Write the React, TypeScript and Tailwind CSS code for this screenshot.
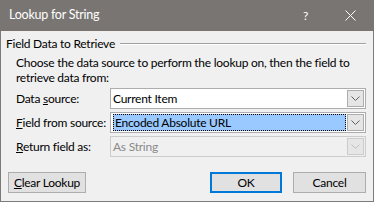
import React from "react";

const font = { fontFamily: 'Lato, "Noto Sans", sans-serif' };

function Chevron({ color = "#5c5c5c" }: { color?: string }) {
  return (
    <svg width="9" height="5" viewBox="0 0 9 5" fill="none">
      <path d="M0.5 0.5 L4.5 4.5 L8.5 0.5" stroke={color} strokeWidth="1" />
    </svg>
  );
}

function Arrow({ disabled = false }: { disabled?: boolean }) {
  return (
    <div
      className={
        "w-[17px] h-[17px] flex items-center justify-center border " +
        (disabled ? "border-[#cccccc] bg-[#e6e6e6]" : "border-[#adadad] bg-[#e5e5e5]")
      }
    >
      <Chevron color={disabled ? "#bfbfbf" : "#606060"} />
    </div>
  );
}

export default function App() {
  return (
    <div className="w-[374px] h-[202px] flex flex-col text-[12px] tracking-[-0.25px] text-black select-none whitespace-nowrap" style={font}>
      <div className="h-[31px] shrink-0 bg-[#797572] flex items-center text-white">
        <span className="ml-[9px] text-[12.5px]">Lookup for String</span>
        <span className="ml-auto mr-[37px] text-[12px]">?</span>
        <svg className="mr-[18px]" width="11" height="11" viewBox="0 0 11 11">
          <path d="M0.5 0.5 L10.5 10.5 M10.5 0.5 L0.5 10.5" stroke="white" strokeWidth="1" />
        </svg>
      </div>
      <div className="flex-1 bg-[#f0f0f0] border-x border-b border-[#7e7a77] flex flex-col px-[5px]">
        <div className="flex items-center h-[16px] mt-[5px]">
          <span>Field Data to Retrieve</span>
          <div className="flex-1 ml-[5px] mr-[2px] h-[2px] border-t border-[#a0a0a0] border-b-white border-b" />
        </div>
        <div className="pl-[10px] mt-[3px] leading-[15px]">
          Choose the data source to perform the lookup on, then the field to
          <br />
          retrieve data from:
        </div>
        <div className="pl-[10px] flex flex-col gap-[3px] mt-[3px]">
          <div className="flex items-center">
            <span className="w-[94px]">
              Data <u>s</u>ource:
            </span>
            <div className="w-[256px] h-[21px] bg-white border border-[#adadad] flex items-center pl-[2px] pr-[1px]">
              <span className="flex-1">Current Item</span>
              <Arrow />
            </div>
          </div>
          <div className="flex items-center">
            <span className="w-[94px]">
              <u>F</u>ield from source:
            </span>
            <div className="w-[256px] h-[21px] bg-white border border-[#adadad] flex items-center pl-[2px] pr-[1px] gap-[1px]">
              <span className="flex-1 h-[17px] bg-[#99c9ff] border border-dotted border-black leading-[15px] pl-[1px]">
                Encoded Absolute URL
              </span>
              <Arrow />
            </div>
          </div>
          <div className="flex items-center">
            <span className="w-[94px]">
              <u>R</u>eturn field as:
            </span>
            <div className="w-[256px] h-[21px] bg-[#f0f0f0] border border-[#cccccc] flex items-center pl-[2px] pr-[1px] text-[#8a8a8a]">
              <span className="flex-1">As String</span>
              <Arrow disabled />
            </div>
          </div>
        </div>
        <div className="flex mt-auto mb-[8px] items-center">
          <div className="ml-[2px] w-[78px] h-[21px] bg-[#e1e1e1] border border-[#adadad] flex items-center justify-center">
            <span>
              <u>C</u>lear Lookup
            </span>
          </div>
          <div className="ml-auto w-[72px] h-[21px] bg-[#e1e1e1] border-2 border-[#0078d7] flex items-center justify-center">
            OK
          </div>
          <div className="ml-[11px] mr-[2px] w-[73px] h-[21px] bg-[#e1e1e1] border border-[#adadad] flex items-center justify-center">
            Cancel
          </div>
        </div>
      </div>
    </div>
  );
}
